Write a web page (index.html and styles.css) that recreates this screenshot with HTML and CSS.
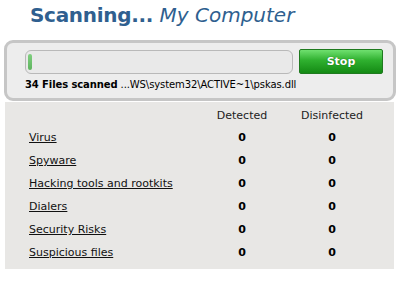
FILE: index.html
```html
<!DOCTYPE html>
<html>
<head>
<meta charset="utf-8">
<link rel="stylesheet" href="styles.css">
</head>
<body>
<h1 class="title"><b>Scanning...</b> <i>My Computer</i></h1>
<div class="panel">
  <div class="bar-row">
    <div class="bar"><div class="fill"></div></div>
    <button class="stop">Stop</button>
  </div>
  <div class="status"><b>34 Files scanned</b> ...WS\system32\ACTIVE~1\pskas.dll</div>
</div>
<div class="results">
  <div class="row head"><span class="name"></span><span class="num">Detected</span><span class="num">Disinfected</span></div>
  <div class="row"><a class="name" href="#">Virus</a><b class="num">0</b><b class="num">0</b></div>
  <div class="row"><a class="name" href="#">Spyware</a><b class="num">0</b><b class="num">0</b></div>
  <div class="row"><a class="name" href="#">Hacking tools and rootkits</a><b class="num">0</b><b class="num">0</b></div>
  <div class="row"><a class="name" href="#">Dialers</a><b class="num">0</b><b class="num">0</b></div>
  <div class="row"><a class="name" href="#">Security Risks</a><b class="num">0</b><b class="num">0</b></div>
  <div class="row"><a class="name" href="#">Suspicious files</a><b class="num">0</b><b class="num">0</b></div>
</div>
</body>
</html>
```
FILE: styles.css
```css
* { box-sizing: border-box; }
body {
  margin: 0;
  width: 404px;
  height: 288px;
  background: #fff;
  font-family: "DejaVu Sans", Verdana, sans-serif;
  font-size: 11px;
  color: #111;
  overflow: hidden;
}
.title {
  margin: 0;
  padding: 3px 0 0 30px;
  height: 40px;
  font-size: 20px;
  font-weight: normal;
  color: #2f5f8f;
}
.title b { font-weight: bold; letter-spacing: -0.3px; }
.title i { font-style: italic; }
.panel {
  margin: 0 8px 0 4px;
  height: 61px;
  border: 3px solid #c6c6c6;
  border-radius: 9px;
  background: #ededed;
  padding: 6px 0 0 18px;
}
.bar-row {
  display: flex;
  align-items: center;
  gap: 6px;
}
.bar {
  width: 268px;
  height: 24px;
  border: 1px solid #b9b9b9;
  border-radius: 6px;
  background: #e9e9e9;
  padding: 3px 0 3px 2px;
}
.fill {
  width: 4px;
  height: 100%;
  border-radius: 2px;
  background: linear-gradient(#7fcf7f, #5fb45f);
}
.stop {
  width: 84px;
  height: 25px;
  border: 1px solid #1f7a1f;
  border-radius: 2px;
  background: linear-gradient(#6fe06f 0%, #2fb02f 45%, #148a14 100%);
  color: #fff;
  font-family: "DejaVu Sans", Verdana, sans-serif;
  font-weight: bold;
  font-size: 11px;
  padding: 0;
  text-shadow: 0 0 1px #0a5a0a;
}
.status {
  margin-top: 5px;
  font-size: 10px;
  letter-spacing: -0.1px;
  color: #000;
}
.results {
  margin: 1px 10px 0 5px;
  height: 167px;
  background: #e8e7e5;
  padding: 3px 0 0 24px;
}
.row {
  display: flex;
  align-items: center;
  height: 23px;
}
.row.head { height: 21px; color: #222; }
.name {
  width: 168px;
  color: #111;
  text-decoration: underline;
}
.num {
  width: 90px;
  text-align: center;
}
b.num { font-weight: bold; color: #000; }
```
